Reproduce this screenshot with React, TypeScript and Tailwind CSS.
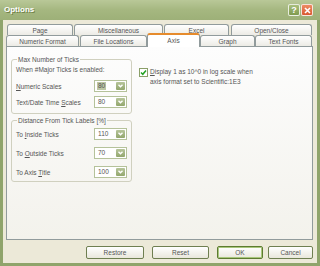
import React from "react";

/* XP (olive theme) "Options" dialog, Axis tab */

const rowOne = [
  { label: "Page", w: "w-[66px]", ml: "ml-[4px]" },
  { label: "Miscellaneous", w: "w-[89px]", ml: "ml-[1px]" },
  { label: "Excel", w: "w-[65px]", ml: "ml-[1px]" },
  { label: "Open/Close", w: "w-[81px]", ml: "ml-[2px]" },
];

const rowTwo = [
  { label: "Numeric Format", w: "w-[73px]", ml: "ml-[3px]" },
  { label: "File Locations", w: "w-[67px]", ml: "ml-[1px]" },
  { label: "Axis", w: "w-[53px]", ml: "ml-0", active: true },
  { label: "Graph", w: "w-[55px]", ml: "ml-0" },
  { label: "Text Fonts", w: "w-[57px]", ml: "ml-0" },
];

function Tab({ label, w, ml, active }: { label: string; w: string; ml: string; active?: boolean }) {
  if (active) {
    return (
      <div
        className={`${w} ${ml} relative z-10 h-[14px] mb-[-1px] flex items-start justify-center pt-[2px] bg-white border border-b-0 border-[#919b9c] border-t-2 border-t-[#e68b2c] rounded-t-[3px] leading-[8px]`}
      >
        {label}
      </div>
    );
  }
  return (
    <div
      className={`${w} ${ml} h-[11px] flex items-center justify-center border border-b-0 border-[#919b9c] rounded-t-[3px] bg-gradient-to-b from-white to-[#ecebe5] leading-[9px]`}
    >
      {label}
    </div>
  );
}

function Combo({ value, selected }: { value: string; selected?: boolean }) {
  return (
    <div className="w-[33px] h-[12px] flex items-stretch bg-white border border-[#b5c29a]">
      <div className="flex-1 flex items-center pl-[2px]">
        <span className={selected ? "bg-[#bcc6a4] px-[1px] leading-[8px]" : "px-[1px] leading-[8px]"}>{value}</span>
      </div>
      <div className="w-[9px] m-[1px] rounded-[1px] bg-gradient-to-b from-[#b7c59b] to-[#93a76d] flex items-center justify-center">
        <svg width="5" height="4" viewBox="0 0 5 4">
          <polyline points="0.5,0.8 2.5,2.8 4.5,0.8" fill="none" stroke="#ffffff" strokeWidth="1.4" />
        </svg>
      </div>
    </div>
  );
}

function Field({ children, value, selected, mt }: { children: React.ReactNode; value: string; selected?: boolean; mt: string }) {
  return (
    <div className={`${mt} h-[12px] flex items-center`}>
      <span className="w-[78px] leading-[9px]">{children}</span>
      <Combo value={value} selected={selected} />
    </div>
  );
}

function Button({ label, w, ml, focus }: { label: string; w: string; ml: string; focus?: boolean }) {
  return (
    <div
      className={`${w} ${ml} h-[13px] flex items-center justify-center rounded-[2px] border bg-gradient-to-b from-white to-[#e9e7dc] ${
        focus ? "border-[#5d7b30] shadow-[inset_0_0_0_1px_#a9c77c]" : "border-[#6f7f51]"
      }`}
    >
      {label}
    </div>
  );
}

export default function App() {
  return (
    <div className="w-[320px] h-[266px] flex flex-col bg-[#8fa46b] font-['Liberation_Sans',Arial,sans-serif] text-[6.5px] text-[#555555] overflow-hidden">
      {/* title bar */}
      <div className="h-[20px] flex items-center px-[4px] bg-gradient-to-b from-[#b9c898] via-[#a5b780] to-[#9db078]">
        <span className="text-[8px] font-bold text-white [text-shadow:1px_1px_0_#6f8048] leading-[10px]">Options</span>
        <div className="ml-auto flex gap-[1px] mr-[3px]">
          <div className="w-[12px] h-[12px] rounded-[2px] border border-white/80 bg-gradient-to-b from-[#a9bf7d] to-[#7f9a4e] flex items-center justify-center text-white font-bold text-[9px] leading-[9px]">
            ?
          </div>
          <div className="w-[12px] h-[12px] rounded-[2px] border border-white/80 bg-gradient-to-b from-[#ec8a62] to-[#d9582f] flex items-center justify-center">
            <svg width="7" height="7" viewBox="0 0 7 7">
              <path d="M1 1 L6 6 M6 1 L1 6" stroke="#ffffff" strokeWidth="1.6" />
            </svg>
          </div>
        </div>
      </div>

      {/* body */}
      <div className="flex-1 mx-[3px] mb-[3px] bg-[#ece9d8] flex flex-col pt-[4px] pb-[4px]">
        <div className="h-[11px] flex">
          {rowOne.map((t) => (
            <Tab key={t.label} {...t} />
          ))}
        </div>
        <div className="h-[11px] flex items-end">
          {rowTwo.map((t) => (
            <Tab key={t.label} {...t} />
          ))}
        </div>

        {/* tab page */}
        <div className="ml-[3px] w-[307px] h-[194px] border border-[#919b9c] bg-gradient-to-b from-[#fdfdfd] to-[#f3f2ec] flex">
          <div className="ml-[4px] w-[121px] flex flex-col">
            <fieldset className="mt-[8px] border border-[#d0d0bf] rounded-[3px] px-[4px] pb-[5px]">
              <legend className="ml-[1px] px-[1px] leading-[9px]">Max Number of Ticks</legend>
              <div className="mt-[1px] leading-[9px]">When #Major Ticks is enabled:</div>
              <Field mt="mt-[6px]" value="80" selected>
                <u>N</u>umeric Scales
              </Field>
              <Field mt="mt-[4px]" value="80">
                Text/Date Time <u>S</u>cales
              </Field>
            </fieldset>
            <fieldset className="mt-[2px] border border-[#d0d0bf] rounded-[3px] px-[4px] pb-[3px]">
              <legend className="ml-[1px] px-[1px] leading-[9px]">Distance From Tick Labels [%]</legend>
              <Field mt="mt-[3px]" value="110">
                To <u>I</u>nside Ticks
              </Field>
              <Field mt="mt-[7px]" value="70">
                To <u>O</u>utside Ticks
              </Field>
              <Field mt="mt-[7px]" value="100">
                To Axis <u>T</u>itle
              </Field>
            </fieldset>
          </div>

          <div className="ml-[7px] mt-[20px] flex items-start h-fit">
            <div className="mt-[1px] w-[9px] h-[9px] border border-[#8b9f69] bg-white flex items-center justify-center">
              <svg width="7" height="7" viewBox="0 0 7 7">
                <polyline points="1,3.5 2.8,5.3 6,1.5" fill="none" stroke="#21a121" strokeWidth="1.5" />
              </svg>
            </div>
            <div className="ml-[2px] leading-[10px]">
              <div>
                <u>D</u>isplay 1 as 10^0 in log scale when
              </div>
              <div>axis format set to Scientific:1E3</div>
            </div>
          </div>
        </div>

        {/* buttons */}
        <div className="mt-[6px] flex">
          <Button label="Restore" w="w-[58px]" ml="ml-[83px]" />
          <Button label="Reset" w="w-[57px]" ml="ml-[8px]" />
          <Button label="OK" w="w-[46px]" ml="ml-[8px]" focus />
          <Button label="Cancel" w="w-[45px]" ml="ml-[5px]" />
        </div>
      </div>
    </div>
  );
}
